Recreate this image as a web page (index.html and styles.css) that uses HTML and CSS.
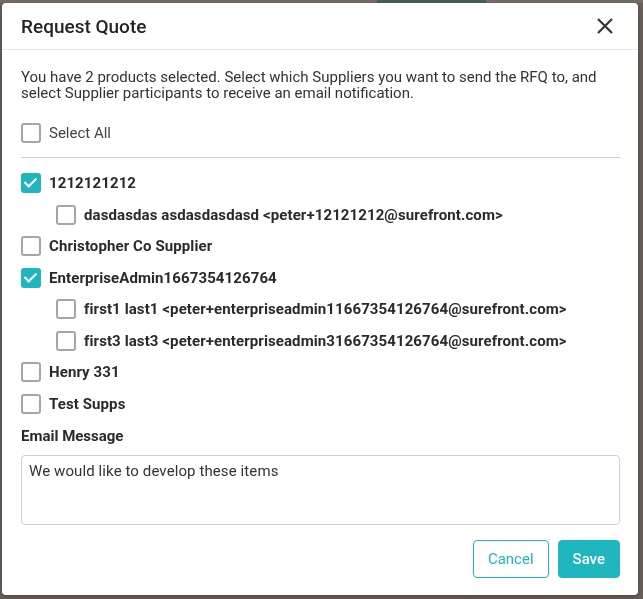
FILE: index.html
```html
<!DOCTYPE html>
<html lang="en">
<head>
  <meta charset="UTF-8">
  <meta name="viewport" content="width=device-width, initial-scale=1.0">
  <title>Request Quote</title>
  <link rel="stylesheet" href="styles.css">
</head>
<body>
<div class="page-bg">
  <div class="bg-bar"></div>
</div>

<!-- Request quote dialog -->
<div class="modal">
  <div class="modal-content">
    <div class="modal-header">
      <h2>Request Quote</h2>
      <button class="close" aria-label="Close">
        <svg width="18" height="18" viewBox="0 0 18 18">
          <path d="M2 2 L16 16 M16 2 L2 16" stroke="#333" stroke-width="2.2" fill="none"/>
        </svg>
      </button>
    </div>
    <div class="modal-body">
      <p class="intro">You have 2 products selected. Select which Suppliers you want to send the RFQ to, and select Supplier participants to receive an email notification.</p>

      <label class="check select-all"><input type="checkbox"><span class="box"></span>Select All</label>
      <hr>

      <div class="suppliers">
        <label class="check supplier"><input type="checkbox" checked><span class="box"></span>1212121212</label>
        <label class="check participant"><input type="checkbox"><span class="box"></span>dasdasdas asdasdasdasd &lt;peter+12121212@surefront.com&gt;</label>
        <label class="check supplier"><input type="checkbox"><span class="box"></span>Christopher Co Supplier</label>
        <label class="check supplier"><input type="checkbox" checked><span class="box"></span>EnterpriseAdmin1667354126764</label>
        <label class="check participant"><input type="checkbox"><span class="box"></span>first1 last1 &lt;peter+enterpriseadmin11667354126764@surefront.com&gt;</label>
        <label class="check participant"><input type="checkbox"><span class="box"></span>first3 last3 &lt;peter+enterpriseadmin31667354126764@surefront.com&gt;</label>
        <label class="check supplier"><input type="checkbox"><span class="box"></span>Henry 331</label>
        <label class="check supplier"><input type="checkbox"><span class="box"></span>Test Supps</label>
      </div>

      <label class="field-label" for="message">Email Message</label>
      <textarea id="message">We would like to develop these items</textarea>

      <div class="modal-buttons">
        <button class="cancel">Cancel</button>
        <button class="save">Save</button>
      </div>
    </div>
  </div>
</div>
</body>
</html>
```
FILE: styles.css
```css
body {
  margin: 0;
  font-family: Roboto, "Liberation Sans", sans-serif;
  color: #333;
  background-color: #8f8f8f;
  height: 599px;
  overflow: hidden;
}
.page-bg {
  height: 3px;
  background: #a3acab;
  position: relative;
}
.bg-bar {
  position: absolute;
  left: 377px;
  width: 109px;
  height: 3px;
  background: #3a8f90;
}
.modal {
  position: fixed;
  top: 0;
  left: 0;
  width: 100%;
  height: 100%;
  background-color: rgba(80, 60, 45, 0.55);
}
.modal-content {
  position: absolute;
  top: 3px;
  left: 2px;
  width: 636px;
  height: 592px;
  background: #fff;
  border-radius: 4px;
  box-shadow: 0 2px 6px rgba(0, 0, 0, 0.3);
}
.modal-header {
  display: flex;
  align-items: center;
  justify-content: space-between;
  height: 46px;
  padding: 0 19px;
  border-bottom: 1px solid #e5e5e5;
}
.modal-header h2 {
  margin: 0;
  font-size: 19px;
  font-weight: 500;
  color: #212529;
}
.close {
  background: none;
  border: none;
  padding: 0;
  width: 18px;
  height: 18px;
  cursor: pointer;
  margin-right: 5px;
}
.close svg {
  display: block;
}
.modal-body {
  padding: 19px 18px 0 19px;
}
.intro {
  margin: 0 0 22px;
  font-size: 15px;
  line-height: 16px;
  color: #333;
}
.check {
  display: flex;
  align-items: center;
  height: 20px;
  font-size: 15px;
  cursor: pointer;
}
.check input {
  display: none;
}
.box {
  width: 16px;
  height: 16px;
  border: 2px solid #a6a6a6;
  border-radius: 3px;
  margin-right: 8px;
  flex-shrink: 0;
  position: relative;
}
.check input:checked + .box {
  background: #20b6c0;
  border-color: #20b6c0;
}
.check input:checked + .box::after {
  content: "";
  position: absolute;
  left: 4px;
  top: 0px;
  width: 5px;
  height: 10px;
  border: solid #fff;
  border-width: 0 2px 2px 0;
  transform: rotate(45deg);
}
.select-all {
  color: #444;
  margin-bottom: 14px;
}
hr {
  border: none;
  border-top: 1px solid #d0d0d0;
  margin: 0 0 15px;
}
.suppliers {
  display: flex;
  flex-direction: column;
  gap: 11.5px;
}
.supplier,
.participant {
  font-weight: 700;
  color: #2a2a2a;
  letter-spacing: 0.1px;
}
.participant {
  padding-left: 35px;
}
.field-label {
  display: block;
  margin-top: 13px;
  font-size: 15px;
  font-weight: 700;
  color: #2a2a2a;
}
textarea {
  display: block;
  box-sizing: border-box;
  width: 100%;
  height: 70px;
  margin-top: 10px;
  padding: 6px 7px;
  border: 1px solid #cfcfcf;
  border-radius: 4px;
  font-family: Roboto, "Liberation Sans", sans-serif;
  font-size: 15px;
  letter-spacing: 0.1px;
  color: #333;
  resize: none;
}
.modal-buttons {
  display: flex;
  justify-content: flex-end;
  gap: 9px;
  margin-top: 15px;
}
.modal-buttons button {
  height: 38px;
  padding: 0 14px;
  border-radius: 4px;
  font-family: Roboto, "Liberation Sans", sans-serif;
  font-size: 15px;
  cursor: pointer;
}
.cancel {
  background: #fff;
  color: #20b6c0;
  border: 1px solid #20b6c0;
}
.save {
  background: #20b6c0;
  color: #fff;
  border: 1px solid #20b6c0;
  font-weight: 500;
  padding: 0 16px;
}
```
